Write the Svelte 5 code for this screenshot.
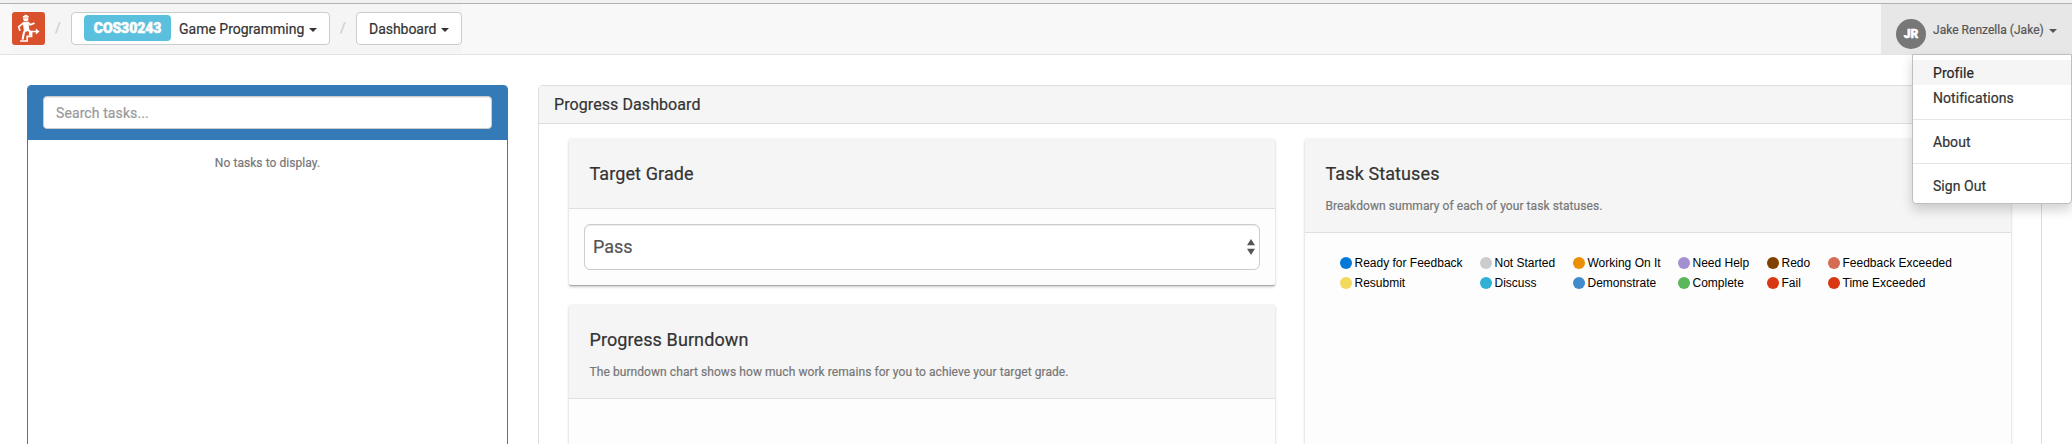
<script>
  const legend = [
    ['Ready for Feedback', '#0079d8', 'Resubmit', '#f2d85c'],
    ['Not Started', '#cccccc', 'Discuss', '#31b0d5'],
    ['Working On It', '#eb8f06', 'Demonstrate', '#428bca'],
    ['Need Help', '#a48fd1', 'Complete', '#5bb75b'],
    ['Redo', '#804000', 'Fail', '#d93713'],
    ['Feedback Exceeded', '#d46b54', 'Time Exceeded', '#d93713']
  ];
  const widths = [140, 93, 105, 89, 61, 125];
</script>

<div class="page">
  <header class="navbar">
    <nav class="crumbs">
      <svg class="logo" viewBox="0 0 33 33">
        <rect width="33" height="33" rx="3" fill="#d9512c" />
        <g fill="none" stroke="#fff">
          <path d="M8.2 29h7v-4.6h4.4v-4.9h5" stroke-width="1.6" />
          <path d="M11.3 10.4h4.6l1 7.6-3.2 1.4-1.4-1.6z" fill="#fff" stroke-width="1" stroke-linejoin="round" />
          <path d="M11.6 10.8l-5 4 1.2 3.4M16 10.4l2.3 2.4 3.6-1.4" stroke-width="1.7" stroke-linecap="round" stroke-linejoin="round" />
          <path d="M13.2 17.5l-1.6 4.5-1 5.6M15.4 17.4l2.6 2.1v4" stroke-width="2.1" />
        </g>
        <path d="M23.8 16.4l3.8 3.1-3.8 3.1z" fill="#fff" />
        <circle cx="13.8" cy="6.7" r="2.6" fill="#fff" />
        <path d="M10.8 5.2l3-1.9 2.8 1.4" stroke="#fff" stroke-width="1.2" fill="none" />
        <path d="M11.7 6.1h4" stroke="#e58b70" stroke-width=".8" />
      </svg>
      <span class="slash">/</span>
      <button class="btn unit"><span class="code">COS30243</span><span>Game Programming</span><i class="caret"></i></button>
      <span class="slash">/</span>
      <button class="btn view"><span>Dashboard</span><i class="caret"></i></button>
    </nav>
    <div class="user">
      <span class="avatar">JR</span><span class="name">Jake Renzella (Jake)</span><i class="caret"></i>
      <ul class="menu">
        <li class="active">Profile</li>
        <li>Notifications</li>
        <li class="divider"></li>
        <li>About</li>
        <li class="divider"></li>
        <li>Sign Out</li>
      </ul>
    </div>
  </header>

  <main>
    <aside class="tasks">
      <div class="search"><input placeholder="Search tasks..." /></div>
      <p><span>No tasks to display.</span></p>
    </aside>
    <section class="dashboard">
      <h2><span>Progress Dashboard</span></h2>
      <div class="columns">
        <div class="col">
          <article class="card grade">
            <header><h3>Target Grade</h3></header>
            <div class="body">
              <div class="select">
                <span>Pass</span>
                <svg width="8" height="16" viewBox="0 0 8 16"><path d="M0 6.3L4 0l4 6.3zM0 9.7h8L4 16z" fill="#555" /></svg>
              </div>
            </div>
          </article>
          <article class="card grow">
            <header class="tall">
              <h3>Progress Burndown</h3>
              <p>The burndown chart shows how much work remains for you to achieve your target grade.</p>
            </header>
          </article>
        </div>
        <article class="card col">
          <header class="tall">
            <h3>Task Statuses</h3>
            <p>Breakdown summary of each of your task statuses.</p>
          </header>
          <div class="legend">
            {#each legend as item, i}
              <div class="pair" style="width: {widths[i]}px">
                <span><i style="background: {item[1]}"></i><b>{item[0]}</b></span>
                <span><i style="background: {item[3]}"></i><b>{item[2]}</b></span>
              </div>
            {/each}
          </div>
        </article>
      </div>
    </section>
  </main>
</div>

<style>
  :global(body) { margin: 0; overflow: hidden; background: #fff; }
  * { box-sizing: border-box; }
  .page { height: 444px; overflow: hidden; display: flex; flex-direction: column; font: 14px/20px Roboto, sans-serif; color: #333; border-top: 3px solid #f1f1f1; -webkit-text-stroke: .2px currentColor; }
  h2, h3, p, ul { margin: 0; padding: 0; font-weight: 400; }
  .navbar { flex: none; height: 52px; display: flex; justify-content: space-between; background: #f8f8f8; border-top: 1px solid #b2b2b2; border-bottom: 1px solid #e3e3e3; }
  .crumbs { margin-left: 12px; height: 49px; display: flex; align-items: flex-start; padding-top: 8px; background: #f5f5f5; }
  .logo { width: 33px; height: 33px; flex: none; }
  .slash { color: #ccc; line-height: 32px; width: 26px; padding-left: 10px; }
  .btn { font: inherit; color: #333; height: 33px; padding: 0 0 0 12px; display: flex; align-items: center; background: #fff; border: 1px solid #ccc; border-radius: 4px; white-space: nowrap; }
  .unit { width: 259px; }
  .view { width: 106px; letter-spacing: -.04px; }
  .code { width: 87px; height: 26px; margin: -1px 8px 0 0; border-radius: 4px; background: #5bc0de; color: #fff; font-weight: 900; line-height: 26px; text-align: center; letter-spacing: -.1px; -webkit-text-stroke: .5px #fff; }
  .caret { flex: none; margin-left: 5px; margin-top: 2px; border: 4px solid transparent; border-top-color: #333; border-bottom: 0; }
  .user { position: relative; width: 191px; height: 50px; background: #e7e7e7; color: #555; display: flex; align-items: center; font-size: 12px; padding-left: 15px; }
  .avatar { width: 30px; height: 30px; margin-top: 9px; border-radius: 50%; background: #777; color: #fff; font-weight: 900; font-size: 12px; line-height: 30px; text-align: center; margin-right: 7px; -webkit-text-stroke: .5px #fff; }
  .name { margin-top: 2px; letter-spacing: .03px; }
  .user .caret { border-top-color: #555; margin: 4px 0 0 5px; }
  .menu { position: absolute; top: 50px; right: 0; width: 160px; height: 150px; list-style: none; padding-top: 5px; background: #fff; border: 1px solid #bfbfbf; border-radius: 0 0 4px 4px; box-shadow: 0 6px 12px rgba(0,0,0,.175); font-size: 14px; letter-spacing: .06px; color: #333; z-index: 5; }
  .menu li { height: 25px; line-height: 26px; padding-left: 20px; }
  .menu li.active { background: #f5f5f5; color: #262626; }
  .menu li.divider { height: 1px; background: #e5e5e5; margin: 9px 0; }
  main { flex: 1; display: flex; padding: 30px 30px 0 27px; gap: 30px; min-height: 0; }
  .tasks { width: 481px; border: 1px solid #337ab7; border-radius: 4px; height: 420px; flex: none; }
  .search { height: 54px; background: #337ab7; padding: 10px 15px; border-radius: 2px 2px 0 0; }
  input { display: block; width: 449px; height: 33px; border: 1px solid #ccc; border-radius: 4px; padding: 0 12px; font: inherit; letter-spacing: .1px; box-shadow: inset 0 1px 1px rgba(0,0,0,.075); }
  input::placeholder { color: #999; opacity: 1; }
  .tasks p { text-align: center; font-size: 12px; letter-spacing: .06px; margin-top: 13px; color: #777; }
  .dashboard { flex: 1; height: 420px; border: 1px solid #ddd; border-radius: 4px; display: flex; flex-direction: column; }
  h2 { height: 38px; background: #f5f5f5; border-bottom: 1px solid #ddd; padding-left: 15px; font-size: 16px; letter-spacing: .08px; line-height: 38px; }
  .columns { flex: 1; display: flex; gap: 30px; padding: 15px 30px 0 30px; }
  .col { flex: 1; display: flex; flex-direction: column; }
  .card { background: #fdfdfd; box-shadow: 0 1px 3px rgba(0,0,0,.2), 0 0 1px rgba(0,0,0,.15); border-radius: 2px; }
  .grade { height: 147px; margin-bottom: 19px; border-bottom: 1px solid #aaa; }
  .grow { flex: 1; }
  .card header { height: 70px; background: #f5f5f5; border-bottom: 1px solid #e0e0e0; border-radius: 2px 2px 0 0; padding: 22px 20.5px 0; }
  .card header.tall { height: 94px; }
  h3 { font-size: 18px; line-height: 25px; letter-spacing: .1px; }
  .card header p { font-size: 12px; line-height: 20px; letter-spacing: .075px; margin-top: 10px; color: #777; }
  .body { padding: 15px; }
  .select { height: 46px; border: 1px solid #ccc; border-radius: 6px; background: #fff; display: flex; align-items: center; justify-content: space-between; padding: 0 4px 0 8px; color: #555; font-size: 18px; box-shadow: inset 0 1px 1px rgba(0,0,0,.075); }
  .legend { display: flex; padding: 20px 0 0 34.5px; font: 12px/20px "Liberation Sans", Arial, sans-serif; color: #000; -webkit-text-stroke: 0; }
  .pair { display: flex; flex-direction: column; flex: none; }
  .pair span { display: flex; align-items: center; height: 20px; white-space: nowrap; }
  .pair i { width: 12px; height: 12px; border-radius: 50%; margin-right: 3px; }
  .pair b { font-weight: 400; }
</style>
